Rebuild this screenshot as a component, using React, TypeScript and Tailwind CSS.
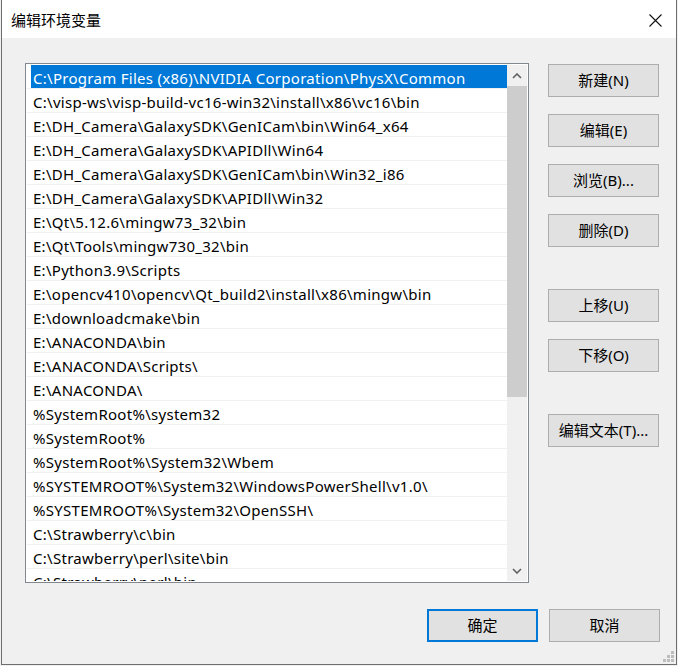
const PATHS = [
  'C:\\Program Files (x86)\\NVIDIA Corporation\\PhysX\\Common',
  'C:\\visp-ws\\visp-build-vc16-win32\\install\\x86\\vc16\\bin',
  'E:\\DH_Camera\\GalaxySDK\\GenICam\\bin\\Win64_x64',
  'E:\\DH_Camera\\GalaxySDK\\APIDll\\Win64',
  'E:\\DH_Camera\\GalaxySDK\\GenICam\\bin\\Win32_i86',
  'E:\\DH_Camera\\GalaxySDK\\APIDll\\Win32',
  'E:\\Qt\\5.12.6\\mingw73_32\\bin',
  'E:\\Qt\\Tools\\mingw730_32\\bin',
  'E:\\Python3.9\\Scripts',
  'E:\\opencv410\\opencv\\Qt_build2\\install\\x86\\mingw\\bin',
  'E:\\downloadcmake\\bin',
  'E:\\ANACONDA\\bin',
  'E:\\ANACONDA\\Scripts\\',
  'E:\\ANACONDA\\',
  '%SystemRoot%\\system32',
  '%SystemRoot%',
  '%SystemRoot%\\System32\\Wbem',
  '%SYSTEMROOT%\\System32\\WindowsPowerShell\\v1.0\\',
  '%SYSTEMROOT%\\System32\\OpenSSH\\',
  'C:\\Strawberry\\c\\bin',
  'C:\\Strawberry\\perl\\site\\bin',
  'C:\\Strawberry\\perl\\bin'
]

const FONT = "font-['Noto_Sans','Noto_Sans_CJK_SC',sans-serif]"

function WinButton({ label, primary }: { label: string; primary?: boolean }) {
  return (
    <button
      className={
        'flex h-[33px] w-[111px] items-center justify-center bg-[#e1e1e1] text-[15px] text-black ' +
        (primary ? 'border-2 border-[#0078d7]' : 'border border-[#adadad]')
      }
    >
      {label}
    </button>
  )
}

function ScrollBar() {
  return (
    <div className="flex w-[20px] flex-col bg-[#f0f0f0]">
      <div className="flex h-[21px] items-center justify-center">
        <svg width="10" height="6" viewBox="0 0 10 6">
          <path d="M1 5 L5 1 L9 5" fill="none" stroke="#606060" strokeWidth="1.6" />
        </svg>
      </div>
      <div className="h-[311px] bg-[#cdcdcd]" />
      <div className="flex-1" />
      <div className="flex h-[21px] items-center justify-center">
        <svg width="10" height="6" viewBox="0 0 10 6">
          <path d="M1 1 L5 5 L9 1" fill="none" stroke="#606060" strokeWidth="1.6" />
        </svg>
      </div>
    </div>
  )
}

export default function App() {
  return (
    <div className={'h-[666px] w-[678px] bg-[#f0f0f0] ' + FONT}>
      <div className="relative ml-[1px] flex h-[665px] w-[676px] flex-col border-x border-b border-[#6e6e6e]">
        {/* title bar */}
        <div className="flex h-[38px] items-center justify-between bg-white pl-[9px] pr-[14px] pt-[2px]">
          <span className="text-[15px] text-black">编辑环境变量</span>
          <svg width="13" height="13" viewBox="0 0 13 13">
            <path d="M0.5 0.5 L12.5 12.5 M12.5 0.5 L0.5 12.5" stroke="#111" strokeWidth="1.1" />
          </svg>
        </div>

        <div className="flex flex-1 flex-col bg-[#f0f0f0] pt-[25px]">
          <div className="flex">
            {/* path list */}
            <div className="ml-[23px] flex h-[520px] w-[504px] border border-[#828790] bg-white p-[1px]">
              <div className="flex-1 overflow-hidden">
                {PATHS.map((p, i) => (
                  <div key={p} className="h-[24px] border-b border-[#f0f0f0]">
                    <div
                      className={
                        'ml-[4px] flex h-[23px] items-center whitespace-nowrap pl-[2px] pt-[3px] text-[15px] tracking-[0.28px] ' +
                        (i === 0 ? 'bg-[#0078d7] text-white' : 'text-black')
                      }
                    >
                      {p}
                    </div>
                  </div>
                ))}
              </div>
              <ScrollBar />
            </div>

            {/* side buttons */}
            <div className="ml-[19px] mt-[1px] flex flex-col">
              <div className="flex flex-col gap-[17px]">
                <WinButton label="新建(N)" />
                <WinButton label="编辑(E)" />
                <WinButton label="浏览(B)..." />
                <WinButton label="删除(D)" />
              </div>
              <div className="mt-[42px] flex flex-col gap-[17px]">
                <WinButton label="上移(U)" />
                <WinButton label="下移(O)" />
              </div>
              <div className="mt-[42px]">
                <WinButton label="编辑文本(T)..." />
              </div>
            </div>
          </div>

          <div className="mt-[26px] flex justify-end gap-[11px] pr-[16px]">
            <WinButton label="确定" primary />
            <WinButton label="取消" />
          </div>
        </div>

        {/* resize grip */}
        <svg className="absolute bottom-[1px] right-[1px]" width="12" height="12" viewBox="0 0 12 12">
          <rect x="8" y="0" width="3" height="3" fill="#bdbdbd" />
          <rect x="4" y="4" width="3" height="3" fill="#bdbdbd" />
          <rect x="8" y="4" width="3" height="3" fill="#bdbdbd" />
          <rect x="0" y="8" width="3" height="3" fill="#bdbdbd" />
          <rect x="4" y="8" width="3" height="3" fill="#bdbdbd" />
          <rect x="8" y="8" width="3" height="3" fill="#bdbdbd" />
        </svg>
      </div>
    </div>
  )
}
